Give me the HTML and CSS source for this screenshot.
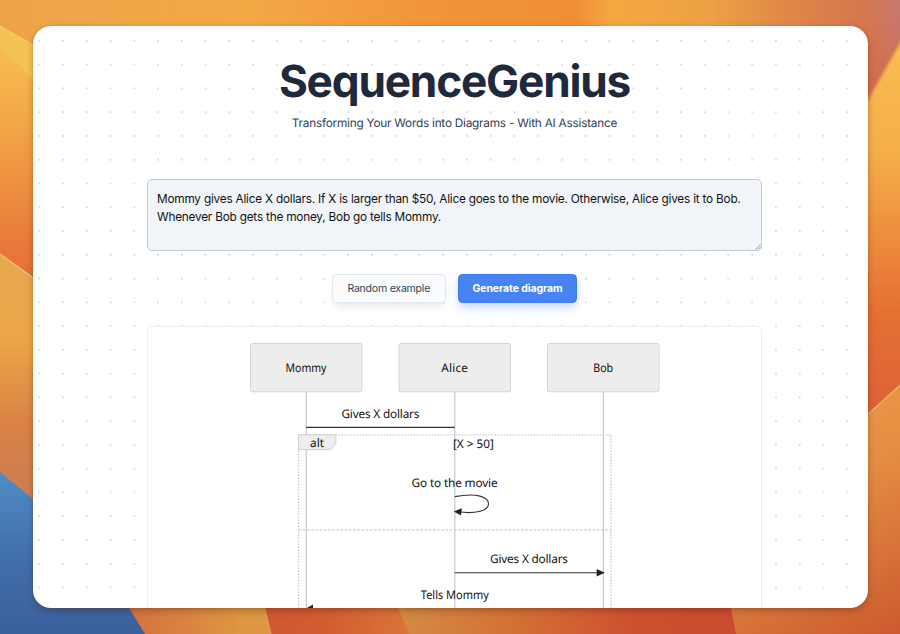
FILE: index.html
```html
<!DOCTYPE html>
<html lang="en">
<head>
<meta charset="utf-8">
<title>SequenceGenius</title>
<link rel="stylesheet" href="styles.css">
</head>
<body>
<svg class="wallpaper" viewBox="0 0 900 634" aria-hidden="true">
  <defs>
    <linearGradient id="top" x1="0" x2="900" y1="0" y2="0" gradientUnits="userSpaceOnUse">
      <stop offset="0" stop-color="#eda449"/><stop offset=".27" stop-color="#f3a846"/><stop offset=".5" stop-color="#f19339"/><stop offset=".64" stop-color="#f08e38"/><stop offset=".68" stop-color="#f5a840"/><stop offset=".79" stop-color="#eda044"/><stop offset=".88" stop-color="#df8648"/><stop offset=".96" stop-color="#d5774f"/><stop offset="1" stop-color="#c7776c"/>
    </linearGradient>
    <linearGradient id="topright" x1="0" x2="0" y1="20" y2="100" gradientUnits="userSpaceOnUse">
      <stop offset="0" stop-color="#d56d4a" stop-opacity="0"/><stop offset="1" stop-color="#d2694a"/>
    </linearGradient>
    <linearGradient id="left1" x1="0" x2="0" y1="50" y2="275" gradientUnits="userSpaceOnUse">
      <stop offset="0" stop-color="#f8bc50"/><stop offset=".35" stop-color="#f2a546"/><stop offset="1" stop-color="#e76f37"/>
    </linearGradient>
    <linearGradient id="left2" x1="0" x2="0" y1="254" y2="498" gradientUnits="userSpaceOnUse">
      <stop offset="0" stop-color="#e8a74f"/><stop offset=".35" stop-color="#eca648"/><stop offset=".7" stop-color="#da8244"/><stop offset="1" stop-color="#cd7b54"/>
    </linearGradient>
    <linearGradient id="blue" x1="0" x2="0" y1="475" y2="634" gradientUnits="userSpaceOnUse">
      <stop offset="0" stop-color="#4f8bc6"/><stop offset=".5" stop-color="#4270ad"/><stop offset="1" stop-color="#3a609b"/>
    </linearGradient>
    <linearGradient id="b1" x1="130" x2="270" y1="0" y2="0" gradientUnits="userSpaceOnUse">
      <stop offset="0" stop-color="#d5713f"/><stop offset=".8" stop-color="#dd9742"/><stop offset="1" stop-color="#dd9742"/>
    </linearGradient>
    <linearGradient id="b2" x1="264" x2="410" y1="0" y2="0" gradientUnits="userSpaceOnUse">
      <stop offset="0" stop-color="#d1572f"/><stop offset=".4" stop-color="#d25c31"/><stop offset="1" stop-color="#d87639"/>
    </linearGradient>
    <linearGradient id="b3" x1="400" x2="736" y1="0" y2="0" gradientUnits="userSpaceOnUse">
      <stop offset="0" stop-color="#d48b42"/><stop offset=".35" stop-color="#d37035"/><stop offset=".7" stop-color="#ce502f"/><stop offset="1" stop-color="#cb4b2e"/>
    </linearGradient>
    <linearGradient id="right1" x1="0" x2="0" y1="42" y2="414" gradientUnits="userSpaceOnUse">
      <stop offset="0" stop-color="#fabd51"/><stop offset=".3" stop-color="#f5ae48"/><stop offset=".72" stop-color="#e57033"/><stop offset="1" stop-color="#dc6234"/>
    </linearGradient>
    <linearGradient id="right2" x1="770" y1="385" x2="900" y2="634" gradientUnits="userSpaceOnUse">
      <stop offset="0" stop-color="#ec9c48"/><stop offset=".4" stop-color="#e58e43"/><stop offset="1" stop-color="#cb5a2f"/>
    </linearGradient>
    <filter id="soft" x="-20%" y="-20%" width="140%" height="140%"><feGaussianBlur stdDeviation="1.5"/></filter>
  </defs>
  <rect width="900" height="634" fill="url(#top)"/>
  <rect x="850" y="20" width="50" height="90" fill="url(#topright)"/>
  <path d="M0 26 60 60V300H0Z" fill="url(#left1)"/>
  <path d="M0 26 60 60V104L0 48Z" fill="#f5c353"/>
  <path d="M0 26 60 60" stroke="#f6c579"/>
  <path d="M0 254 60 297V540H0Z" fill="url(#left2)"/>
  <path d="M0 254 60 297" stroke="#efc081" stroke-width="1.3"/>
  <path d="M840 150 904 36V500H840Z" fill="url(#right1)" filter="url(#soft)"/>
  <path d="M700 634V570L900 385V634Z" fill="url(#right2)"/>
  <path d="M840 440 900 385" stroke="#eeb16c" stroke-width="1.3"/>
  <path d="M380 560H722L736 634H380Z" fill="url(#b3)"/>
  <path d="M250 560H378L409 634H250Z" fill="url(#b2)"/>
  <path d="M100 560H253L271 634H100Z" fill="url(#b1)"/>
  <path d="M253 560 271 634" stroke="#dfaa60"/>
  <path d="M0 472 50 513 100 560 145 634H0Z" fill="url(#blue)"/>
</svg>

<main class="window">
  <div class="column">
    <header class="hero">
      <h1 class="title">SequenceGenius</h1>
      <p class="tagline">Transforming Your Words into Diagrams - With AI Assistance</p>
    </header>
    <div class="field">
      <textarea class="prompt" spellcheck="false">Mommy gives Alice X dollars. If X is larger than $50, Alice goes to the movie. Otherwise, Alice gives it to Bob. Whenever Bob gets the money, Bob go tells Mommy.</textarea>
      <svg class="grip" width="6" height="6" viewBox="0 0 6 6"><path d="M.5 5.5 5.5.5M3 5.5 5.5 3" stroke="#8b9099" stroke-width=".8"/></svg>
    </div>
    <div class="actions">
      <button class="btn btn-plain">Random example</button>
      <button class="btn btn-primary">Generate diagram</button>
    </div>
    <section class="card">
      <svg class="diagram" width="615" height="300" viewBox="147 326 615 300">
        <g stroke="#c9c9c9" stroke-width="1.2">
          <path d="M306.2 392V626M454.8 392V626M603.4 392V626"/>
        </g>
        <g fill="#ededed" stroke="#d5d5d5">
          <rect x="250.5" y="343.5" width="111.5" height="48.3" rx="2"/>
          <rect x="399" y="343.5" width="111.5" height="48.3" rx="2"/>
          <rect x="547.5" y="343.5" width="111.5" height="48.3" rx="2"/>
        </g>
        <g fill="none" stroke="#c9c9c9" stroke-width="1.3">
          <path stroke-dasharray="1.5 1.5" d="M298.7 626V434.9H610.9V626"/>
          <path stroke-dasharray="2.3 1.9" d="M298.7 529.9H610.9"/>
        </g>
        <path d="M298.5 434.7H335.8V444.5L330.3 449.7H298.5Z" fill="#ededed" stroke="#d0d0d0"/>
        <g fill="none" stroke="#333" stroke-width="1.1">
          <path d="M306.2 427.4H454.8M454.8 572.7H600M312 609.2H603"/>
          <path d="M454.8 496.6C477 492.5 488.5 497 488.5 503.8C488.5 511.5 474 514 458 511.8"/>
        </g>
        <g fill="#222">
          <path d="M453.8 511.6 461.8 508.2 461 515.5Z"/>
          <path d="M604.8 572.7 596.7 568.9V576.5Z"/>
          <path d="M305.4 608.8 313 604.5V612.5Z"/>
        </g>
        <g class="labels">
          <text x="306" y="372.3" textLength="41" lengthAdjust="spacingAndGlyphs">Mommy</text>
          <text x="454.6" y="372.3" textLength="26.5">Alice</text>
          <text x="603.2" y="372.3" textLength="20" lengthAdjust="spacingAndGlyphs">Bob</text>
          <text x="380.4" y="417.8" textLength="78">Gives X dollars</text>
          <text x="317" y="447.4" textLength="14">alt</text>
          <text x="473.4" y="448.2" textLength="41">[X &gt; 50]</text>
          <text x="454.6" y="487.2" textLength="86">Go to the movie</text>
          <text x="529" y="563.4" textLength="78">Gives X dollars</text>
          <text x="454.8" y="599.2" textLength="68" lengthAdjust="spacingAndGlyphs">Tells Mommy</text>
        </g>
      </svg>
    </section>
  </div>
</main>
</body>
</html>
```
FILE: styles.css
```css
* {
  box-sizing: border-box;
}

body {
  margin: 0;
  width: 900px;
  height: 634px;
  overflow: hidden;
  padding: 26px 32px 26px 32.5px;
  font-family: Inter, "Liberation Sans", sans-serif;
  text-rendering: geometricPrecision;
}

.wallpaper {
  position: absolute;
  inset: 0;
  width: 900px;
  height: 634px;
  z-index: -1;
}

.window {
  height: 582px;
  overflow: hidden;
  border-radius: 18px;
  background-color: #fff;
  background-image: radial-gradient(circle, #dedfe1 0.9px, transparent 1.5px);
  background-size: 23.77px 23.77px;
  background-position: -5.7px 3px;
  box-shadow: 0 0 1px rgba(120, 40, 0, 0.4), 0 3px 7px rgba(70, 20, 0, 0.3);
}

.column {
  width: 615px;
  margin-left: 114.5px;
}

.hero {
  height: 153px;
  padding-top: 27px;
  text-align: center;
}

.title {
  margin: 0;
  color: #1e293b;
  font-size: 44.2px;
  font-weight: 680;
  line-height: 56px;
  letter-spacing: -1.2px;
}

.tagline {
  margin: 5px 0 0;
  color: #334155;
  font-size: 11.8px;
  line-height: 18px;
  letter-spacing: -0.23px;
}

.field {
  position: relative;
}

.prompt {
  display: block;
  width: 615px;
  height: 72px;
  padding: 10px 9px 8px;
  border: 1px solid #c3cbd8;
  border-radius: 5px;
  background: #f1f5f9;
  color: #111;
  font: 11.8px/18px Inter, "Liberation Sans", sans-serif;
  letter-spacing: -0.215px;
  overflow: hidden;
  resize: none;
}

.grip {
  position: absolute;
  right: 1px;
  bottom: 1px;
}

.actions {
  display: flex;
  justify-content: center;
  gap: 12px;
  margin: 23px 0;
}

.btn {
  height: 29px;
  padding: 1px 0 0;
  border-radius: 4.5px;
  font-family: inherit;
  font-size: 10.5px;
  line-height: 16px;
}

.btn-plain {
  width: 114px;
  border: 1px solid #e2e8f0;
  background: #f9fbfd;
  color: #334155;
  letter-spacing: -0.2px;
  box-shadow: 0 5px 9px -2px rgba(148, 163, 184, 0.25);
}

.btn-primary {
  width: 119.5px;
  border: 1px solid #3b7bf0;
  background: #4784f2;
  color: #fff;
  font-weight: 700;
  letter-spacing: -0.1px;
  box-shadow: 0 5px 10px -1px rgba(71, 132, 242, 0.35);
}

.card {
  height: 310px;
  border-radius: 5px;
  background: #fff;
  box-shadow: inset 0 0 0 1px #eceef2;
}

.diagram {
  display: block;
}

.labels {
  font-family: "Noto Sans", "Open Sans", sans-serif;
  font-size: 11.8px;
  fill: #111;
  text-anchor: middle;
}
```
